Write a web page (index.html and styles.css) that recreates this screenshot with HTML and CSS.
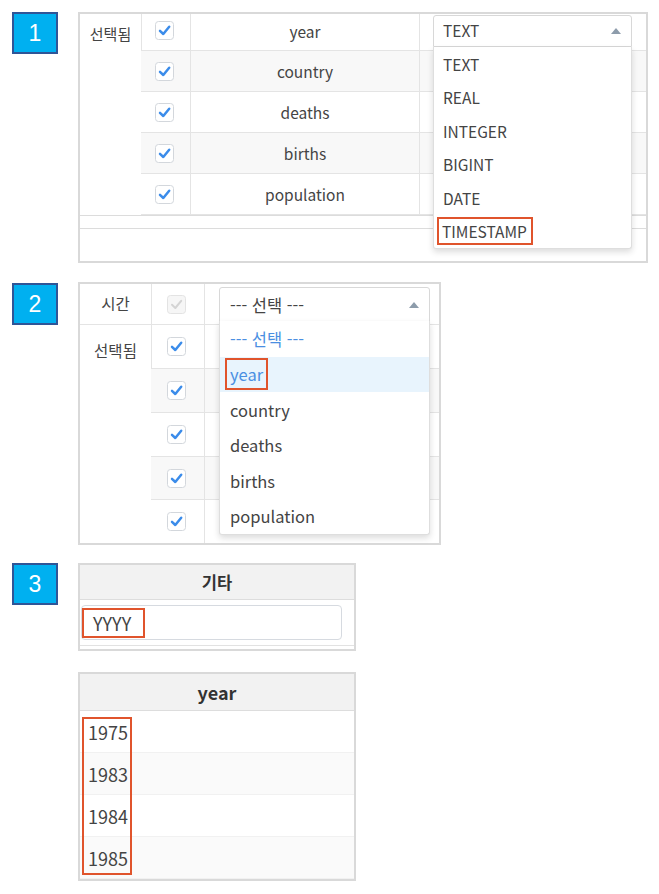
FILE: index.html
```html
<!DOCTYPE html>
<html lang="ko">
<head>
<meta charset="utf-8">
<link rel="stylesheet" href="styles.css">
</head>
<body>
<div class="page">

  <!-- Section 1 -->
  <div class="sec sec1">
    <div class="badge">1</div>
    <div class="p1">
      <div class="g1">
        <div class="lbl1">선택됨</div>
        <div class="cb first"><svg class="chk" viewBox="0 0 19 19"><rect x="0.5" y="0.5" width="18" height="18" rx="3" class="box"/><path d="M5 9.8 L8.3 13 L14.2 5.8" class="tick"/></svg></div>
        <div class="nm top">year</div>
        <div class="ty">
          <div class="sel sel1"><span>TEXT</span><i class="caret"></i></div>
          <div class="menu menu1">
            <div class="mi">TEXT</div>
            <div class="mi">REAL</div>
            <div class="mi">INTEGER</div>
            <div class="mi">BIGINT</div>
            <div class="mi">DATE</div>
            <div class="mi"><span class="mark mk1">TIMESTAMP</span></div>
          </div>
        </div>

        <div class="cb alt"><svg class="chk" viewBox="0 0 19 19"><rect x="0.5" y="0.5" width="18" height="18" rx="3" class="box"/><path d="M5 9.8 L8.3 13 L14.2 5.8" class="tick"/></svg></div>
        <div class="nm alt">country</div>
        <div class="ty alt"></div>

        <div class="cb"><svg class="chk" viewBox="0 0 19 19"><rect x="0.5" y="0.5" width="18" height="18" rx="3" class="box"/><path d="M5 9.8 L8.3 13 L14.2 5.8" class="tick"/></svg></div>
        <div class="nm">deaths</div>
        <div class="ty"></div>

        <div class="cb alt"><svg class="chk" viewBox="0 0 19 19"><rect x="0.5" y="0.5" width="18" height="18" rx="3" class="box"/><path d="M5 9.8 L8.3 13 L14.2 5.8" class="tick"/></svg></div>
        <div class="nm alt">births</div>
        <div class="ty alt"></div>

        <div class="cb"><svg class="chk" viewBox="0 0 19 19"><rect x="0.5" y="0.5" width="18" height="18" rx="3" class="box"/><path d="M5 9.8 L8.3 13 L14.2 5.8" class="tick"/></svg></div>
        <div class="nm">population</div>
        <div class="ty"></div>
      </div>
      <div class="foot1a"></div>
      <div class="foot1b"></div>
    </div>
  </div>

  <!-- Section 2 -->
  <div class="sec sec2">
    <div class="badge">2</div>
    <div class="p2">
      <div class="g2">
        <div class="lbl2 top">시간</div>
        <div class="cb2 lft"><svg class="chk dis" viewBox="0 0 19 19"><rect x="0.5" y="0.5" width="18" height="18" rx="3" class="box"/><path d="M5 9.8 L8.3 13 L14.2 5.8" class="tick"/></svg></div>
        <div class="c3">
          <div class="sel sel2"><span>--- 선택 ---</span><i class="caret"></i></div>
          <div class="menu menu2">
            <div class="mi2 blue">--- 선택 ---</div>
            <div class="mi2 blue hl"><span class="mark mk2">year</span></div>
            <div class="mi2">country</div>
            <div class="mi2">deaths</div>
            <div class="mi2">births</div>
            <div class="mi2">population</div>
          </div>
        </div>

        <div class="lbl2 span">선택됨</div>
        <div class="cb2 lft"><svg class="chk" viewBox="0 0 19 19"><rect x="0.5" y="0.5" width="18" height="18" rx="3" class="box"/><path d="M5 9.8 L8.3 13 L14.2 5.8" class="tick"/></svg></div>
        <div class="c3"></div>

        <div class="cb2 alt"><svg class="chk" viewBox="0 0 19 19"><rect x="0.5" y="0.5" width="18" height="18" rx="3" class="box"/><path d="M5 9.8 L8.3 13 L14.2 5.8" class="tick"/></svg></div>
        <div class="c3 alt"></div>

        <div class="cb2"><svg class="chk" viewBox="0 0 19 19"><rect x="0.5" y="0.5" width="18" height="18" rx="3" class="box"/><path d="M5 9.8 L8.3 13 L14.2 5.8" class="tick"/></svg></div>
        <div class="c3"></div>

        <div class="cb2 alt"><svg class="chk" viewBox="0 0 19 19"><rect x="0.5" y="0.5" width="18" height="18" rx="3" class="box"/><path d="M5 9.8 L8.3 13 L14.2 5.8" class="tick"/></svg></div>
        <div class="c3 alt"></div>

        <div class="cb2 last"><svg class="chk" viewBox="0 0 19 19"><rect x="0.5" y="0.5" width="18" height="18" rx="3" class="box"/><path d="M5 9.8 L8.3 13 L14.2 5.8" class="tick"/></svg></div>
        <div class="c3 last"></div>
      </div>
    </div>
  </div>

  <!-- Section 3 -->
  <div class="sec sec3">
    <div class="badge">3</div>
    <div class="col3">
      <div class="p3a">
        <div class="hd">기타</div>
        <div class="inp"><span class="mark mk3">YYYY</span></div>
        <div class="foot3"></div>
      </div>
      <div class="p3b">
        <div class="hd hdb">year</div>
        <div class="yr">1975</div>
        <div class="yr alt">1983</div>
        <div class="yr">1984</div>
        <div class="yr alt">1985</div>
        <div class="mark mk4"></div>
      </div>
    </div>
  </div>

</div>
</body>
</html>
```

FILE: styles.css
```css
* { box-sizing: border-box; }

body {
  margin: 0;
  background: #ffffff;
  font-family: "Noto Sans CJK KR", "Noto Sans", sans-serif;
  color: #3c3c3c;
}

.page {
  display: flex;
  flex-direction: column;
  padding: 12px 0 0 12px;
}

.sec {
  display: flex;
  align-items: flex-start;
  gap: 20px;
}

.sec2 { margin-top: 19px; }
.sec3 { margin-top: 18px; }
.sec2 .badge { margin-top: 1px; }

.badge {
  width: 46px;
  height: 42px;
  flex: none;
  background: #00b0f0;
  border: 2px solid #2f5597;
  color: #ffffff;
  font-family: "Liberation Sans", Arial, sans-serif;
  font-size: 23px;
  display: flex;
  align-items: center;
  justify-content: center;
}

/* checkbox */
.chk { width: 19px; height: 19px; display: block; }
.chk .box { fill: #ffffff; stroke: #d3d7dc; stroke-width: 1; }
.chk .tick { fill: none; stroke: #3b8cea; stroke-width: 2.5; stroke-linecap: round; stroke-linejoin: round; }
.chk.dis .box { fill: #f6f6f6; stroke: #e3e3e3; }
.chk.dis .tick { stroke: #d4d4d4; stroke-width: 2; }

.mark { border: 2px solid #e0542c; }

/* ---------- Section 1 ---------- */
.p1 {
  width: 570px;
  height: 251px;
  border: 2px solid #d9d9d9;
  font-size: 15.5px;
}

.g1 {
  display: grid;
  grid-template-columns: 61px 50px 229px 1fr;
  grid-template-rows: 37px 41px 41px 41px 41px;
}

.lbl1 {
  grid-row: 1 / 6;
  text-align: center;
  padding-top: 9px;
  font-size: 15px;
  color: #444;
}

.cb, .nm, .ty {
  border-bottom: 1px solid #e4e4e4;
}
.cb {
  display: flex;
  align-items: center;
  justify-content: center;
  padding-right: 3px;
  border-right: 1px solid #e4e4e4;
}
.cb.first { border-left: 1px solid #e4e4e4; padding-bottom: 3px; }
.nm {
  display: flex;
  align-items: center;
  justify-content: center;
  border-right: 1px solid #e4e4e4;
  color: #444;
}
.nm.top { padding-bottom: 3px; }
.alt { background: #f8f8f8; }
.ty { position: relative; }

.foot1a {
  height: 13px;
  border-top: 1px solid #dcdcdc;
}
.foot1b { border-top: 1px solid #dcdcdc; }

.sel {
  position: relative;
  display: flex;
  align-items: center;
  background: #fff;
  border: 1px solid #d8d8d8;
  border-radius: 3px 3px 0 0;
  color: #444;
}
.sel1 {
  margin: 1px 0 0 13px;
  width: 199px;
  height: 32px;
  padding-left: 9px;
  padding-bottom: 2px;
}
.caret {
  position: absolute;
  right: 10px;
  top: 50%;
  margin-top: -3px;
  width: 0;
  height: 0;
  border-left: 5.5px solid transparent;
  border-right: 5.5px solid transparent;
  border-bottom: 6px solid #8d9cab;
}

.menu {
  position: absolute;
  z-index: 5;
  background: #ffffff;
  border: 1px solid #dedede;
  border-top: none;
  border-radius: 0 0 3px 3px;
  box-shadow: 0 3px 6px rgba(0, 0, 0, 0.14);
}
.menu1 {
  top: 33px;
  left: 13px;
  width: 199px;
  height: 202px;
  display: flex;
  flex-direction: column;
}
.mi {
  height: 33.5px;
  display: flex;
  align-items: center;
  padding-left: 9px;
  color: #444;
}
.mk1 {
  margin-left: -6px;
  padding: 1px 4px 1px 3px;
}

/* ---------- Section 2 ---------- */
.p2 {
  width: 363px;
  height: 263px;
  border: 2px solid #d9d9d9;
}
.g2 {
  display: grid;
  grid-template-columns: 71px 54px 1fr;
  grid-template-rows: 41px 44px 44px 44px 43px 43px;
}
.lbl2 {
  text-align: center;
  font-size: 15.5px;
  color: #444;
}
.lbl2.top {
  border-bottom: 1px solid #e4e4e4;
  padding-top: 8px;
}
.lbl2.span {
  grid-row: 2 / 7;
  padding-top: 14px;
}
.cb2, .c3 { border-bottom: 1px solid #e4e4e4; }
.cb2.last, .c3.last { border-bottom: none; }
.cb2 {
  display: flex;
  align-items: center;
  justify-content: center;
  padding-right: 3px;
  border-right: 1px solid #e4e4e4;
}
.cb2.lft { border-left: 1px solid #e4e4e4; }
.c3 { position: relative; }

.sel2 {
  margin: 3px 0 0 14px;
  width: 211px;
  height: 35px;
  padding-left: 10px;
  font-size: 16.5px;
}
.menu2 {
  top: 37px;
  left: 14px;
  width: 211px;
  height: 214px;
  display: flex;
  flex-direction: column;
}
.mi2 {
  height: 35.6px;
  display: flex;
  align-items: center;
  padding-left: 10px;
  font-size: 16.5px;
  color: #444;
}
.mi2.blue { color: #4a8fe2; }
.mi2.hl { background: #e8f4fd; }
.mk2 {
  margin-left: -5px;
  padding: 2px 3px 2px 3px;
}

/* ---------- Section 3 ---------- */
.col3 {
  display: flex;
  flex-direction: column;
  gap: 21px;
}
.p3a, .p3b {
  width: 278px;
  border: 2px solid #d9d9d9;
  position: relative;
}
.p3a { height: 88px; }
.p3b { height: 209px; }

.hd {
  height: 35px;
  background: #f2f2f2;
  border-bottom: 1px solid #dddddd;
  display: flex;
  align-items: center;
  justify-content: center;
  font-weight: bold;
  font-size: 16.5px;
  color: #333;
}
.hdb {
  height: 37px;
  font-size: 18px;
}

.inp {
  margin: 5px 0 0 1px;
  width: 261px;
  height: 35px;
  border: 1px solid #d6dae0;
  border-radius: 4px;
  display: flex;
  align-items: center;
  font-size: 18px;
  color: #444;
}
.mk3 {
  margin-left: 0;
  height: 30px;
  margin-top: 1px;
  display: flex;
  align-items: center;
  padding: 0 12px 0 9px;
}
.foot3 {
  margin-top: 5px;
  border-top: 1px solid #e2e2e2;
}

.yr {
  height: 42px;
  display: flex;
  align-items: center;
  padding-left: 8px;
  font-size: 18px;
  color: #444;
  border-bottom: 1px solid #f1f1f1;
}
.yr.alt { background: #fafafa; }

.mk4 {
  position: absolute;
  left: 2px;
  top: 43px;
  width: 50px;
  height: 158px;
}
```
